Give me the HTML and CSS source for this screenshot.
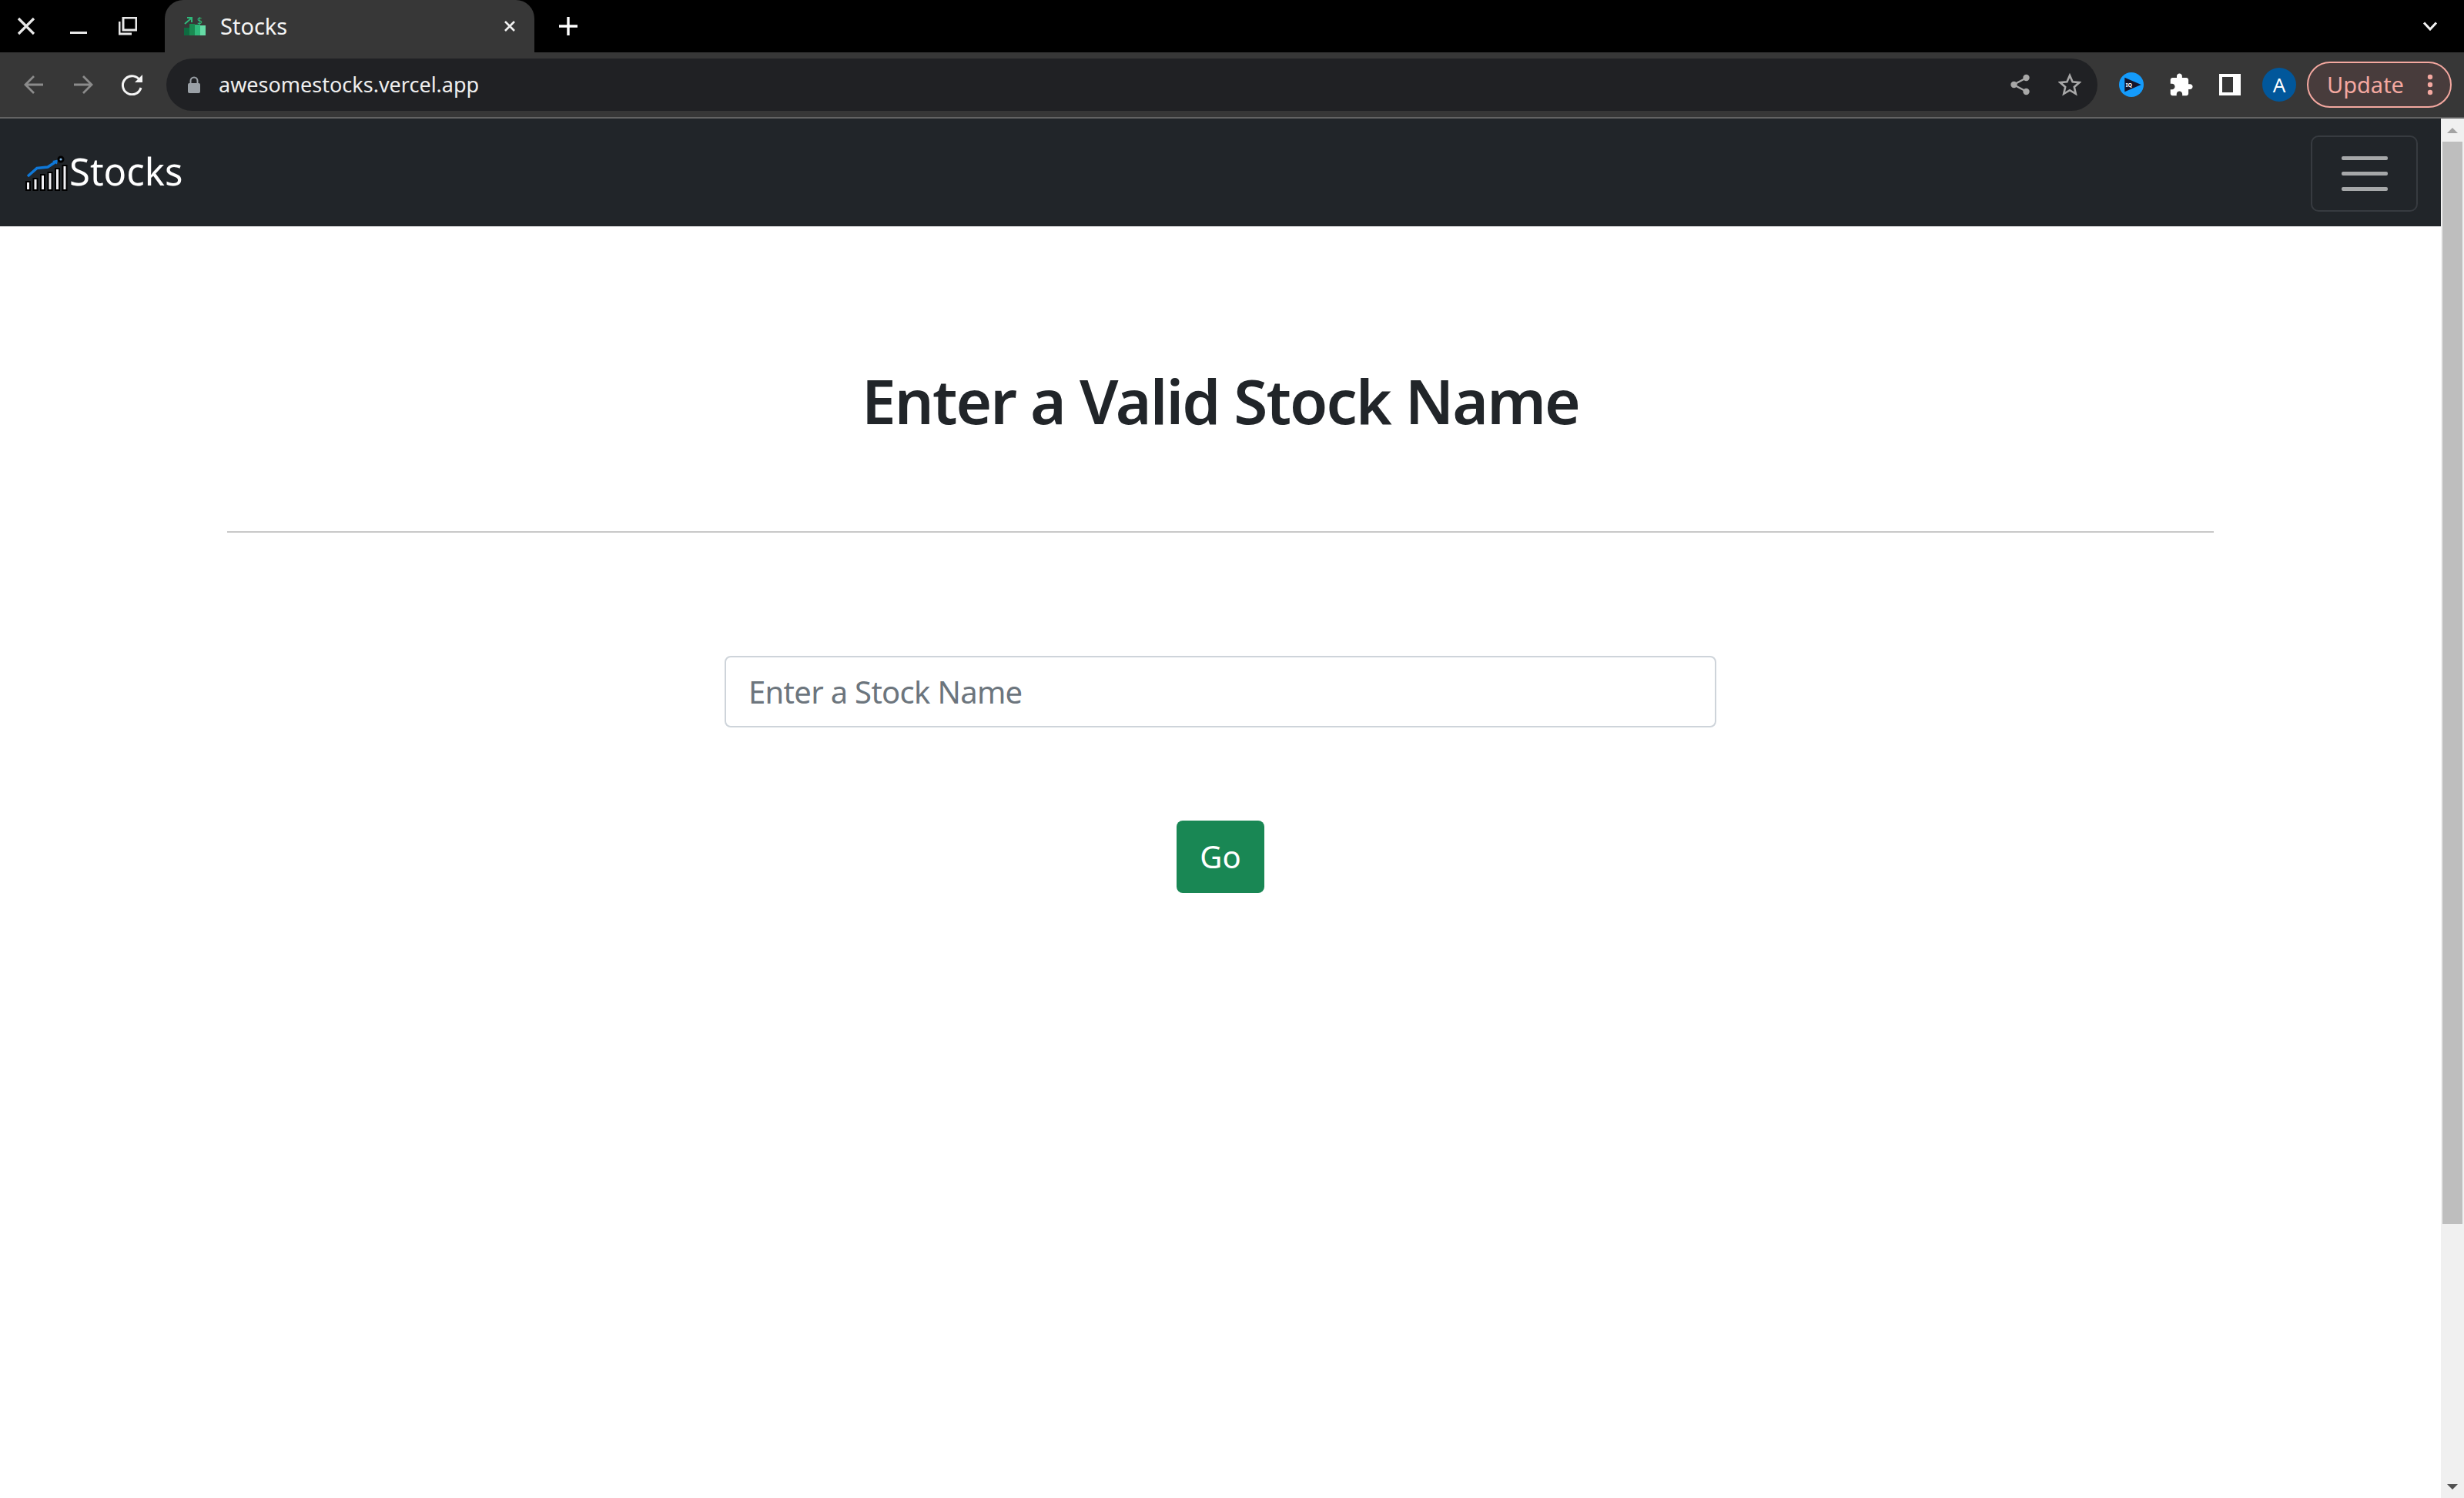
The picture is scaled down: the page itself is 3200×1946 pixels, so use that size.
FILE: index.html
```html
<!DOCTYPE html>
<html lang="en">
<head>
<meta charset="utf-8">
<title>Stocks</title>
<link rel="stylesheet" href="styles.css">
</head>
<body>
<div class="window">
  <div class="tabstrip">
    <div class="winctl">
      <button class="ctl"><svg width="24" height="24" viewBox="0 0 24 24"><path d="M2 2 22 22M22 2 2 22" stroke="#e8e8e8" stroke-width="3.2" fill="none"/></svg></button>
      <button class="ctl"><svg width="28" height="24" viewBox="0 0 28 24"><path d="M5 20.500H27" stroke="#e8e8e8" stroke-width="3" fill="none"/></svg></button>
      <button class="ctl"><svg width="24" height="24" viewBox="0 0 24 24"><path d="M1 6V22H17M6 1H23V17H6Z" stroke="#e8e8e8" stroke-width="3" fill="none"/></svg></button>
    </div>
    <div class="tab">
      <svg class="favicon" width="30" height="38" viewBox="0 -6 30 38">
        <rect x="1" y="15" width="7" height="10" fill="#0f6b41"/>
        <rect x="8" y="10" width="7" height="15" fill="#1a8a52"/>
        <rect x="15" y="11" width="7" height="14" fill="#2fb87a"/>
        <rect x="22" y="12" width="7" height="13" fill="#66dba6"/>
        <path d="M2 10 10 3M5 2H11V8" stroke="#2fb87a" stroke-width="2" fill="none"/>
        <text x="18" y="11" class="dollar">$</text>
      </svg>
      <span class="tabtitle">Stocks</span>
      <svg class="tabclose" width="16" height="16" viewBox="0 0 16 16"><path d="M2 2 14 14M14 2 2 14" stroke="#f0f0f0" stroke-width="2.600" fill="none"/></svg>
    </div>
    <button class="newtab"><svg width="24" height="26" viewBox="0 0 24 26"><path d="M12 1V25M0 13H24" stroke="#fff" stroke-width="3.400" fill="none"/></svg></button>
    <div class="grow"></div>
    <button class="tabsearch"><svg width="20" height="12" viewBox="0 0 20 12"><path d="M2 1.500 10 10 18 1.500" stroke="#f2f2f2" stroke-width="3" fill="none"/></svg></button>
  </div>

  <div class="toolbar">
    <div class="navbtns">
      <button class="tbtn"><svg width="28" height="26" viewBox="0 0 28 26"><path d="M26 13H3M14 2 3 13 14 24" stroke="#8b8b8b" stroke-width="2.800" fill="none"/></svg></button>
      <button class="tbtn"><svg width="28" height="26" viewBox="0 0 28 26"><path d="M2 13H25M14 2 25 13 14 24" stroke="#8b8b8b" stroke-width="2.800" fill="none"/></svg></button>
      <button class="tbtn"><svg width="30" height="28" viewBox="0 0 30 28"><path d="M25 9A12 12 0 1 0 26 18" stroke="#f5f5f5" stroke-width="3" fill="none"/><path d="M28 1V11H18Z" fill="#f5f5f5"/></svg></button>
    </div>
    <div class="omnibox">
      <svg class="lock" width="18" height="22" viewBox="0 0 18 22"><rect x="1" y="9" width="16" height="13" rx="2" fill="#9aa0a6"/><path d="M4.500 10V6A4.500 4.500 0 0 1 13.500 6V10" stroke="#9aa0a6" stroke-width="2" fill="none"/></svg>
      <span class="url">awesomestocks.vercel.app</span>
      <div class="grow"></div>
      <button class="tbtn"><svg width="28" height="28" viewBox="0 0 28 28"><path d="M22 5 5 14 22 23" stroke="#a8a8a8" stroke-width="2.400" fill="none"/><circle cx="21.500" cy="5" r="4.200" fill="#a8a8a8"/><circle cx="21.500" cy="23" r="4.200" fill="#a8a8a8"/><circle cx="5.500" cy="14" r="4.200" fill="#a8a8a8"/></svg></button>
      <button class="tbtn"><svg width="30" height="30" viewBox="0 0 30 30"><path d="M15 3 18.600 11.300 27.500 12.100 20.800 18 22.800 26.800 15 22.200 7.200 26.800 9.200 18 2.500 12.100 11.400 11.300Z" stroke="#a8a8a8" stroke-width="2.600" fill="none"/></svg></button>
    </div>
    <div class="exts">
      <button class="tbtn"><svg width="32" height="32" viewBox="0 0 32 32"><circle cx="16" cy="16" r="16" fill="#149bfb"/><path d="M7.300 6.700 28.700 16 7.300 25.300Z" fill="#14142a"/><text x="8.800" y="18.500" class="iq">IQ</text></svg></button>
      <button class="tbtn"><svg width="33" height="33" viewBox="0 0 24 24"><path d="M20.500 11H19V7c0-1.100-.9-2-2-2h-4V3.500C13 2.120 11.880 1 10.500 1S8 2.120 8 3.500V5H4c-1.100 0-1.990.9-1.990 2v3.800H3.500c1.490 0 2.700 1.210 2.700 2.700s-1.210 2.700-2.700 2.700H2V20c0 1.100.9 2 2 2h3.800v-1.500c0-1.490 1.210-2.700 2.700-2.700 1.490 0 2.700 1.210 2.700 2.700V22H17c1.100 0 2-.9 2-2v-4h1.500c1.380 0 2.500-1.120 2.500-2.500S21.880 11 20.500 11z" fill="#fff"/></svg></button>
      <button class="tbtn"><svg width="28" height="28" viewBox="0 0 28 28"><path fill-rule="evenodd" d="M0 0H28V28H0ZM4 4V24H18V4Z" fill="#fff"/></svg></button>
      <button class="tbtn"><span class="avatar">A</span></button>
    </div>
    <button class="update">
      <span class="updatelabel">Update</span>
      <svg width="8" height="28" viewBox="0 0 8 28"><circle cx="4" cy="4" r="3.200" fill="#f4a8a0"/><circle cx="4" cy="14" r="3.200" fill="#f4a8a0"/><circle cx="4" cy="24" r="3.200" fill="#f4a8a0"/></svg>
    </button>
  </div>

  <div class="viewport">
    <div class="page">
      <nav class="navbar">
        <a class="brand">
          <svg class="logo" width="60" height="50" viewBox="30 195 60 50">
            <g fill="#f0f0f4" stroke="#000" stroke-width="2">
              <rect x="34" y="231" width="5" height="11"/>
              <rect x="43.500" y="227" width="5" height="15"/>
              <rect x="53" y="222" width="5" height="20"/>
              <rect x="62.500" y="219" width="5" height="23"/>
              <rect x="72" y="214" width="5" height="28"/>
              <rect x="81.500" y="210" width="5" height="32"/>
            </g>
            <path d="M36 224 48 213.500 62 212 72 205.500" stroke="#0f78d8" stroke-width="3.400" fill="none"/>
            <path d="M75 202.500 74 208.500 68 204Z" fill="#0f78d8"/>
            <circle cx="79" cy="202" r="4.500" fill="#000"/>
            <circle cx="79" cy="202" r="1.600" fill="#7fb8e8"/>
          </svg>
          <span class="brandname">Stocks</span>
        </a>
        <button class="toggler"><span class="bar"></span><span class="bar"></span><span class="bar"></span></button>
      </nav>
      <main class="content">
        <h1 class="title">Enter a Valid Stock Name</h1>
        <hr class="rule">
        <input class="stock" type="text" placeholder="Enter a Stock Name">
        <button class="go">Go</button>
      </main>
    </div>
    <div class="scrollbar">
      <div class="arrowbox"><span class="arrow-up"></span></div>
      <div class="thumb"></div>
      <div class="grow"></div>
      <div class="arrowbox"><span class="arrow-down"></span></div>
    </div>
  </div>
</div>
</body>
</html>
```
FILE: styles.css
```css
* { box-sizing: border-box; }
html, body { margin: 0; padding: 0; height: 100%; overflow: hidden; background: #fff; }
body { font-family: "Noto Sans", "Open Sans", sans-serif; }
button { border: 0; background: none; padding: 0; margin: 0; font: inherit; color: inherit; display: flex; align-items: center; justify-content: center; }
.window { display: flex; flex-direction: column; width: 3200px; height: 1946px; }
.grow { flex: 1; }

.tabstrip { height: 68px; background: #000; display: flex; align-items: stretch; }
.winctl { display: flex; width: 214px; padding-left: 1px; }
.ctl { width: 66px; }
.tab { width: 480px; height: 68px; background: #373737; border-radius: 24px 24px 0 0; display: flex; align-items: center; padding-left: 24px; }
.favicon { flex: none; }
.dollar { font-size: 12px; fill: #2fb87a; font-family: "Noto Sans", sans-serif; }
.iq { font-size: 7px; font-weight: 700; fill: #fff; font-family: "Noto Sans", sans-serif; }
.tabtitle { margin-left: 18px; font-size: 29px; line-height: 64px; color: #f4f4f4; flex: 1; }
.tabclose { margin-right: 24px; }
.newtab { width: 60px; margin-left: 14px; }
.tabsearch { width: 40px; margin-right: 24px; }

.toolbar { height: 86px; background: #373737; border-bottom: 2px solid #636363; display: flex; align-items: flex-start; padding-top: 8px; }
.navbtns { display: flex; width: 216px; padding-left: 12px; }
.tbtn { width: 64px; height: 68px; flex: none; }
.omnibox { width: 2508px; height: 68px; background: #202124; border-radius: 34px; display: flex; align-items: center; padding: 0 4px 0 27px; }
.lock { flex: none; }
.url { margin-left: 23px; font-size: 27px; line-height: 64px; color: #eeeeee; }
.exts { display: flex; margin-left: 12px; }
.avatar { width: 44px; height: 44px; border-radius: 50%; background: #01579b; color: #fff; display: flex; align-items: center; justify-content: center; font-size: 26px; }
.update { margin-left: 4px; margin-top: 4px; width: 188px; height: 60px; border: 2px solid #f4a8a0; border-radius: 30px; background: #483c3c; display: flex; align-items: center; justify-content: flex-start; padding-left: 24px; }
.updatelabel { font-size: 29px; line-height: 56px; color: #f4a8a0; width: 130px; text-align: left; }

.viewport { flex: 1; display: flex; min-height: 0; }
.page { flex: 1; min-width: 0; display: flex; flex-direction: column; background: #fff; }
.navbar { height: 140px; background: #212529; display: flex; align-items: center; justify-content: space-between; padding: 0 30px; }
.brand { display: flex; align-items: center; height: 100%; }
.logo { flex: none; margin-top: 2px; }
.brandname { font-size: 49px; color: #fff; margin-top: -4px; }
.toggler { width: 139px; height: 99px; border: 2px solid #373b40; border-radius: 10px; display: flex; flex-direction: column; gap: 15px; align-items: center; justify-content: center; margin-top: 2px; }
.bar { width: 60px; height: 5px; border-radius: 2px; background: #a6a8a9; display: block; }

.content { display: flex; flex-direction: column; align-items: center; padding-top: 170px; }
.title { margin: 0; font-size: 80px; font-weight: 600; line-height: 112px; letter-spacing: -1.9px; color: #212529; }
.rule { width: 2580px; height: 2px; margin: 114px 0 0; border: 0; background: #c8c8c8; }
.stock { width: 1288px; height: 93px; margin-top: 160px; border: 2px solid #ced4da; border-radius: 8px; padding: 0 29px; font: inherit; font-size: 40px; letter-spacing: -0.7px; color: #212529; outline: 0; display: block; }
.stock::placeholder { color: #6c757d; opacity: 1; }
.go { width: 114px; height: 94px; margin-top: 121px; background: #198754; border-radius: 8px; color: #fff; font-size: 40px; line-height: 90px; }

.scrollbar { width: 30px; background: #f0f0f0; display: flex; flex-direction: column; align-items: center; }
.arrowbox { height: 30px; width: 30px; display: flex; align-items: center; justify-content: center; flex: none; }
.arrow-up { width: 0; height: 0; border-left: 7px solid transparent; border-right: 7px solid transparent; border-bottom: 7px solid #a3a3a3; }
.arrow-down { width: 0; height: 0; border-left: 7px solid transparent; border-right: 7px solid transparent; border-top: 7px solid #505050; }
.thumb { width: 26px; height: 1406px; background: #bebebe; flex: none; }
```
